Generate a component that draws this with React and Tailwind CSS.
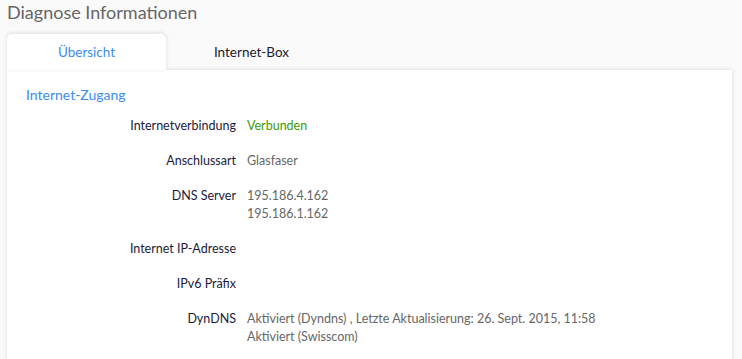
import React from 'react';

const rows = [
  { label: 'Internetverbindung', values: ['Verbunden'], green: true },
  { label: 'Anschlussart', values: ['Glasfaser'] },
  { label: 'DNS Server', values: ['195.186.4.162', '195.186.1.162'] },
  { label: 'Internet IP-Adresse', values: ['\u00a0'] },
  { label: 'IPv6 Präfix', values: ['\u00a0'] },
  {
    label: 'DynDNS',
    values: ['Aktiviert (Dyndns) , Letzte Aktualisierung: 26. Sept. 2015, 11:58', 'Aktiviert (Swisscom)'],
  },
];

export default function App() {
  return (
    <div className="h-[359px] overflow-hidden bg-[#fafafa] font-['Lato','Liberation_Sans',sans-serif]">
      <h1 className="pl-[7px] text-[18px] leading-[24px] text-[#666]">Diagnose Informationen</h1>

      <div className="mt-[10px] flex pl-[7px] text-[13.5px]">
        <div className="relative z-10 flex h-[36px] w-[159px] items-center justify-center rounded-t-[5px] bg-white text-[#3c8ce8] shadow-[0_-1px_4px_rgba(0,0,0,0.12)]">
          Übersicht
        </div>
        <div className="flex h-[36px] w-[171px] items-center justify-center text-[#1b1b2f]">Internet-Box</div>
      </div>

      <div className="relative ml-[7px] w-[725px] bg-white pb-8 shadow-[0_0_4px_rgba(0,0,0,0.14)]">
        <div className="absolute left-0 top-[-4px] z-20 h-[4px] w-[159px] bg-white" />
        <h2 className="pl-[19px] pt-[16px] text-[14px] leading-[18px] text-[#3c8ce8]">Internet-Zugang</h2>
        <div className="mt-[13px] flex flex-col gap-[17px] text-[12.5px] leading-[18px]">
          {rows.map((r) => (
            <div key={r.label} className="flex">
              <div className="w-[229px] shrink-0 text-right text-[#1b1b3a]">{r.label}</div>
              <div className={'pl-[11px] ' + (r.green ? 'text-[#3f9a00]' : 'text-[#666]')}>
                {r.values.map((v, i) => (
                  <div key={i}>{v}</div>
                ))}
              </div>
            </div>
          ))}
        </div>
      </div>
    </div>
  );
}
